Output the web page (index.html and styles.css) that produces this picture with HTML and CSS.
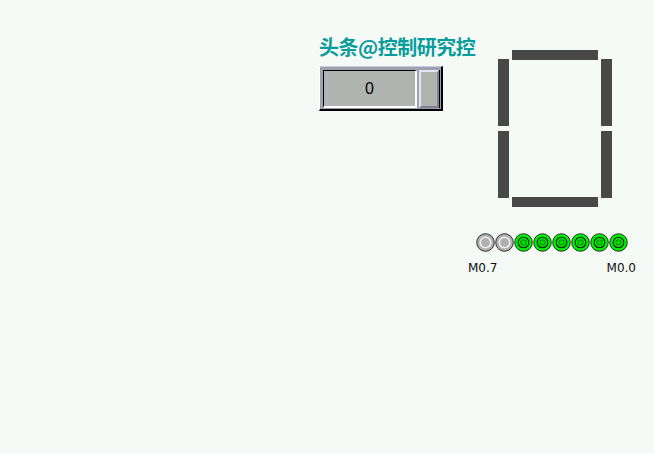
FILE: index.html
```html
<!DOCTYPE html>
<html lang="zh-CN">
<head>
    <meta charset="UTF-8">
    <meta name="viewport" content="width=device-width, initial-scale=1.0">
    <title>HMI Screen</title>
    <link rel="stylesheet" href="styles.css">
</head>
<body>
    <div class="screen">
        <!-- counter widget -->
        <div class="counter">
            <h2 class="title">头条@控制研究控</h2>
            <div class="spin">
                <div class="spin-face">0</div>
                <div class="spin-thumb"></div>
            </div>
        </div>

        <!-- seven segment digit -->
        <svg class="digit" width="114" height="157" viewBox="0 0 114 157">
            <rect x="14" y="0" width="86" height="10"></rect>
            <rect x="0" y="9" width="11" height="67"></rect>
            <rect x="103" y="9" width="11" height="67"></rect>
            <rect x="0" y="81" width="11" height="67"></rect>
            <rect x="103" y="81" width="11" height="67"></rect>
            <rect x="14" y="147" width="86" height="10"></rect>
        </svg>

        <!-- bit lamps M0.7 .. M0.0 -->
        <div class="lamps">
            <div class="lamp-row">
                <svg class="lamp off" width="19" height="19" viewBox="0 0 19 19"><circle class="ring" cx="9.5" cy="9.5" r="8.8"/><circle class="inner" cx="9.5" cy="9.5" r="5.3"/><circle class="core" cx="9.5" cy="9.5" r="2.8"/></svg>
                <svg class="lamp off" width="19" height="19" viewBox="0 0 19 19"><circle class="ring" cx="9.5" cy="9.5" r="8.8"/><circle class="inner" cx="9.5" cy="9.5" r="5.3"/><circle class="core" cx="9.5" cy="9.5" r="2.8"/></svg>
                <svg class="lamp on" width="19" height="19" viewBox="0 0 19 19"><circle class="ring" cx="9.5" cy="9.5" r="8.8"/><circle class="inner" cx="9.5" cy="9.5" r="5.3"/><circle class="core" cx="9.5" cy="9.5" r="2.8"/></svg>
                <svg class="lamp on" width="19" height="19" viewBox="0 0 19 19"><circle class="ring" cx="9.5" cy="9.5" r="8.8"/><circle class="inner" cx="9.5" cy="9.5" r="5.3"/><circle class="core" cx="9.5" cy="9.5" r="2.8"/></svg>
                <svg class="lamp on" width="19" height="19" viewBox="0 0 19 19"><circle class="ring" cx="9.5" cy="9.5" r="8.8"/><circle class="inner" cx="9.5" cy="9.5" r="5.3"/><circle class="core" cx="9.5" cy="9.5" r="2.8"/></svg>
                <svg class="lamp on" width="19" height="19" viewBox="0 0 19 19"><circle class="ring" cx="9.5" cy="9.5" r="8.8"/><circle class="inner" cx="9.5" cy="9.5" r="5.3"/><circle class="core" cx="9.5" cy="9.5" r="2.8"/></svg>
                <svg class="lamp on" width="19" height="19" viewBox="0 0 19 19"><circle class="ring" cx="9.5" cy="9.5" r="8.8"/><circle class="inner" cx="9.5" cy="9.5" r="5.3"/><circle class="core" cx="9.5" cy="9.5" r="2.8"/></svg>
                <svg class="lamp on" width="19" height="19" viewBox="0 0 19 19"><circle class="ring" cx="9.5" cy="9.5" r="8.8"/><circle class="inner" cx="9.5" cy="9.5" r="5.3"/><circle class="core" cx="9.5" cy="9.5" r="2.8"/></svg>
            </div>
            <div class="lamp-labels">
                <span>M0.7</span>
                <span>M0.0</span>
            </div>
        </div>
    </div>
</body>
</html>
```

FILE: styles.css
```css
html, body {
    margin: 0;
    padding: 0;
    background-color: #f5faf6;
}

.screen {
    position: relative;
    width: 654px;
    height: 453px;
    overflow: hidden;
}

.counter {
    position: absolute;
    left: 319px;
    top: 36px;
    display: flex;
    flex-direction: column;
}

.title {
    margin: 0;
    font-family: "Noto Sans CJK SC", "DejaVu Sans", sans-serif;
    font-size: 20px;
    line-height: 21px;
    font-weight: bold;
    color: #089c9c;
    letter-spacing: -0.5px;
}

.spin {
    margin-top: 9px;
    width: 124px;
    height: 45px;
    box-sizing: border-box;
    display: flex;
    gap: 2px;
    padding: 3px 2px 1px 3px;
    background: #a0a0b0;
    border-top: 1px solid #c8c8dc;
    border-left: 1px solid #ffffff;
    border-right: 2px solid #000000;
    border-bottom: 2px solid #000000;
}

.spin-face {
    flex: 1;
    display: flex;
    align-items: center;
    justify-content: center;
    background: #b0b4b0;
    border-top: 1px solid #000000;
    border-left: 1px solid #000000;
    border-right: 2px solid #ffffff;
    border-bottom: 2px solid #ffffff;
    font-family: "Liberation Sans", sans-serif;
    font-size: 16px;
    color: #000000;
}

.spin-thumb {
    width: 16px;
    background: #b0b4b0;
    border-top: 2px solid #e4e4f4;
    border-left: 2px solid #e4e4f4;
    border-right: 2px solid #808090;
    border-bottom: 2px solid #808090;
    box-shadow: 1px 0 0 #000000;
}

.digit {
    position: absolute;
    left: 498px;
    top: 50px;
    fill: #484848;
}

.lamps {
    position: absolute;
    left: 468px;
    top: 233px;
    width: 168px;
    display: flex;
    flex-direction: column;
}

.lamp-row {
    display: flex;
    margin-left: 8px;
}

.lamp {
    display: block;
}

.lamp .ring {
    stroke: #202020;
    stroke-width: 0.9;
}

.lamp.off .ring { fill: #b0b0b0; }
.lamp.off .inner { fill: #b0b0b0; stroke: #f0f0f0; stroke-width: 1.6; }
.lamp.off .core { fill: #b0b0b0; }

.lamp.on .ring { fill: #00ee00; }
.lamp.on .inner { fill: #00ee00; stroke: #002000; stroke-width: 1.1; }
.lamp.on .core { fill: #00d800; stroke: #005000; stroke-width: 0.7; }

.lamp-labels {
    display: flex;
    justify-content: space-between;
    margin-top: 9px;
    font-family: "DejaVu Sans", sans-serif;
    font-size: 12px;
    line-height: 14px;
    color: #101010;
}
```
